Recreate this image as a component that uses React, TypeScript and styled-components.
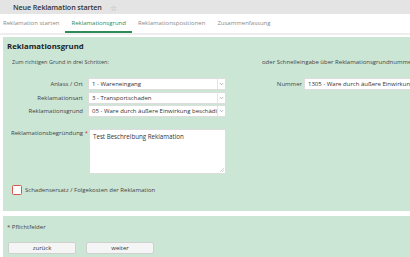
import styled, { createGlobalStyle } from 'styled-components';

const GlobalStyle = createGlobalStyle`
  html, body {
    margin: 0;
    padding: 0;
    background: #fff;
    font-family: 'Open Sans', 'Liberation Sans', sans-serif;
    color: #333;
    overflow: hidden;
  }
`;

const Page = styled.div`
  width: 410px;
  height: 257px;
  display: flex;
  flex-direction: column;
`;

const Header = styled.div`
  height: 14px;
  background: #e4e4e4;
  display: flex;
  align-items: center;
  padding-left: 13px;
  font-size: 7.2px;
  font-weight: 600;
  letter-spacing: -0.1px;
  color: #333;
`;

const Star = styled.span`
  color: #aaa;
  font-size: 8px;
  font-weight: 400;
  margin-left: 8px;
`;

const Tabs = styled.div`
  height: 19px;
  display: flex;
  align-items: stretch;
  margin-left: -3px;
  border-bottom: 2px solid #eeeeee;
`;

const Tab = styled.div<{ $active?: boolean }>`
  font-size: 6px;
  color: ${(p) => (p.$active ? '#2e8b57' : '#8a8a8a')};
  display: flex;
  align-items: center;
  padding: 1px 6px 0;
  border-bottom: 2px solid ${(p) => (p.$active ? '#2e8b57' : 'transparent')};
`;

const Panel = styled.div`
  background: #cce6d6;
  margin-left: 3px;
  margin-top: 2px;
  padding: 4px 0 0 4px;
  height: 174px;
  box-sizing: border-box;
`;

const PanelTitle = styled.div`
  font-size: 7.8px;
  font-weight: 700;
  color: #222;
  height: 11px;
`;

const Columns = styled.div`
  display: flex;
`;

const Left = styled.div`
  width: 226px;
  flex-shrink: 0;
`;

const Right = styled.div`
  flex: 1;
  padding-left: 29px;
  min-width: 0;
`;

const Hint = styled.div<{ $indent?: number; $size?: number }>`
  font-size: ${(p) => p.$size ?? 6}px;
  color: #444;
  margin-top: 6px;
  margin-bottom: 7px;
  margin-left: ${(p) => p.$indent ?? 0}px;
  height: 13px;
  white-space: nowrap;
`;

const FormRow = styled.div`
  display: flex;
  align-items: center;
  height: 12px;
  margin-bottom: 1.5px;
`;

const Label = styled.div<{ $w: number; $pad?: number }>`
  width: ${(p) => p.$w}px;
  box-sizing: border-box;
  text-align: right;
  font-size: 6px;
  color: #444;
  padding-right: ${(p) => p.$pad ?? 5}px;
  white-space: nowrap;
  flex-shrink: 0;
`;

const Select = styled.div`
  width: 138px;
  height: 12px;
  background: #fff;
  border: 1px solid #ddd;
  box-sizing: border-box;
  display: flex;
  align-items: center;
  font-size: 6px;
  color: #333;
  padding-left: 3px;
  overflow: hidden;
  white-space: nowrap;
`;

const SelectText = styled.span`
  flex: 1;
  overflow: hidden;
`;

const Arrow = styled.span`
  width: 7px;
  height: 10px;
  border-left: 1px solid #e4e4e4;
  display: flex;
  align-items: center;
  justify-content: center;
  flex-shrink: 0;
  background: #fff;
`;

const Input = styled.div`
  flex: 1;
  height: 12px;
  background: #fff;
  border: 1px solid #ddd;
  border-right: none;
  box-sizing: border-box;
  display: flex;
  align-items: center;
  font-size: 6px;
  color: #333;
  padding-left: 3px;
  white-space: nowrap;
  overflow: hidden;
`;

const TextRow = styled.div`
  display: flex;
  align-items: flex-start;
  margin-top: 12px;
`;

const Req = styled.span`
  color: #d33;
`;

const TextArea = styled.div`
  width: 137px;
  height: 45px;
  background: #fff;
  border: 1px solid #ddd;
  box-sizing: border-box;
  font-size: 6.2px;
  color: #333;
  padding: 2px 3px;
  position: relative;
`;

const Grip = styled.svg`
  position: absolute;
  right: 1px;
  bottom: 1px;
`;

const CheckRow = styled.div`
  display: flex;
  align-items: center;
  gap: 3px;
  margin-top: 11px;
  margin-left: 5px;
  font-size: 6px;
  color: #444;
`;

const Checkbox = styled.span`
  width: 10px;
  height: 10px;
  border: 1.5px solid #d9534f;
  border-radius: 1.5px;
  background: #fff;
  box-sizing: border-box;
`;

const Footer = styled.div`
  background: #cce6d6;
  margin-left: 3px;
  margin-top: 5px;
  flex: 1;
  padding: 7px 0 0 4px;
`;

const Note = styled.div`
  font-size: 6px;
  color: #444;
  height: 8px;
`;

const Buttons = styled.div`
  display: flex;
  gap: 10px;
  margin-top: 11px;
  padding-left: 1px;
`;

const Button = styled.div`
  width: 68px;
  height: 12px;
  background: #f5f5f5;
  border: 1px solid #d0d0d0;
  border-radius: 2px;
  box-sizing: border-box;
  display: flex;
  align-items: center;
  justify-content: center;
  font-size: 6px;
  color: #333;
`;

function Chevron() {
  return (
    <svg width="5" height="4" viewBox="0 0 5 4">
      <path d="M0.8 1 L2.5 2.8 L4.2 1" fill="none" stroke="#999" strokeWidth="0.7" />
    </svg>
  );
}

const selects = [
  { label: 'Anlass / Ort', value: '1 - Wareneingang' },
  { label: 'Reklamationsart', value: '3 - Transportschaden' },
  { label: 'Reklamationsgrund', value: '05 - Ware durch äußere Einwirkung beschädigt' },
];

export default function App() {
  return (
    <Page>
      <GlobalStyle />
      <Header>
        Neue Reklamation starten<Star>☆</Star>
      </Header>
      <Tabs>
        <Tab>Reklamation starten</Tab>
        <Tab $active>Reklamationsgrund</Tab>
        <Tab>Reklamationspositionen</Tab>
        <Tab>Zusammenfassung</Tab>
      </Tabs>
      <Panel>
        <PanelTitle>Reklamationsgrund</PanelTitle>
        <Columns>
          <Left>
            <Hint $indent={5} $size={5.5}>
              Zum richtigen Grund in drei Schritten:
            </Hint>
            {selects.map((s) => (
              <FormRow key={s.label}>
                <Label $w={81}>{s.label}</Label>
                <Select>
                  <SelectText>{s.value}</SelectText>
                  <Arrow>
                    <Chevron />
                  </Arrow>
                </Select>
              </FormRow>
            ))}
            <TextRow>
              <Label $w={82} $pad={1}>
                Reklamationsbegründung <Req>*</Req>
              </Label>
              <TextArea>
                Test Beschreibung Reklamation
                <Grip width="4" height="4" viewBox="0 0 4 4">
                  <path d="M0 4 L4 0 M2 4 L4 2" stroke="#aaa" strokeWidth="0.5" />
                </Grip>
              </TextArea>
            </TextRow>
            <CheckRow>
              <Checkbox />
              Schadensersatz / Folgekosten der Reklamation
            </CheckRow>
          </Left>
          <Right>
            <Hint>oder Schnelleingabe über Reklamationsgrundnummer</Hint>
            <FormRow>
              <Label $w={42} $pad={2}>
                Nummer
              </Label>
              <Input>1305 - Ware durch äußere Einwirkung</Input>
            </FormRow>
          </Right>
        </Columns>
      </Panel>
      <Footer>
        <Note>* Pflichtfelder</Note>
        <Buttons>
          <Button>zurück</Button>
          <Button>weiter</Button>
        </Buttons>
      </Footer>
    </Page>
  );
}
